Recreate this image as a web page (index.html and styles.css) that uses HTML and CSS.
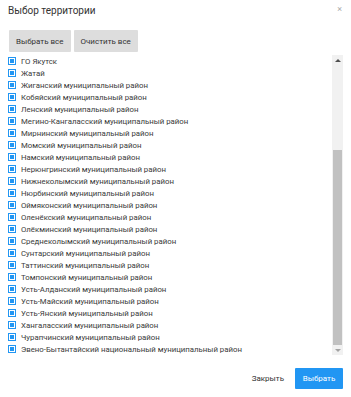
FILE: index.html
```html
<!DOCTYPE html>
<html lang="ru">
<head>
<meta charset="utf-8">
<link rel="stylesheet" href="styles.css">
</head>
<body>
<div class="dialog">
  <div class="header">
    <div class="title">Выбор территории</div>
    <div class="close">×</div>
  </div>
  <div class="toolbar">
    <button class="btn">Выбрать все</button>
    <button class="btn">Очистить все</button>
  </div>
  <div class="listwrap">
    <ul class="list">
      <li><span class="cb"></span>ГО Якутск</li>
      <li><span class="cb"></span>Жатай</li>
      <li><span class="cb"></span>Жиганский муниципальный район</li>
      <li><span class="cb"></span>Кобяйский муниципальный район</li>
      <li><span class="cb"></span>Ленский муниципальный район</li>
      <li><span class="cb"></span>Мегино-Кангаласский муниципальный район</li>
      <li><span class="cb"></span>Мирнинский муниципальный район</li>
      <li><span class="cb"></span>Момский муниципальный район</li>
      <li><span class="cb"></span>Намский муниципальный район</li>
      <li><span class="cb"></span>Нерюнгринский муниципальный район</li>
      <li><span class="cb"></span>Нижнеколымский муниципальный район</li>
      <li><span class="cb"></span>Нюрбинский муниципальный район</li>
      <li><span class="cb"></span>Оймяконский муниципальный район</li>
      <li><span class="cb"></span>Оленёкский муниципальный район</li>
      <li><span class="cb"></span>Олёкминский муниципальный район</li>
      <li><span class="cb"></span>Среднеколымский муниципальный район</li>
      <li><span class="cb"></span>Сунтарский муниципальный район</li>
      <li><span class="cb"></span>Таттинский муниципальный район</li>
      <li><span class="cb"></span>Томпонский муниципальный район</li>
      <li><span class="cb"></span>Усть-Алданский муниципальный район</li>
      <li><span class="cb"></span>Усть-Майский муниципальный район</li>
      <li><span class="cb"></span>Усть-Янский муниципальный район</li>
      <li><span class="cb"></span>Хангаласский муниципальный район</li>
      <li><span class="cb"></span>Чурапчинский муниципальный район</li>
      <li><span class="cb"></span>Эвено-Бытантайский национальный муниципальный район</li>
    </ul>
    <div class="scrollbar">
      <div class="arrow up"></div>
      <div class="track-space"></div>
      <div class="thumb"></div>
      <div class="arrow down"></div>
    </div>
  </div>
  <div class="footer">
    <button class="link">Закрыть</button>
    <button class="primary">Выбрать</button>
  </div>
</div>
</body>
</html>
```
FILE: styles.css
```css
html, body {
  margin: 0;
  padding: 0;
  background: #fff;
}
body {
  font-family: Roboto, "Liberation Sans", Arial, sans-serif;
  color: #333;
}
.dialog {
  width: 351px;
  height: 397px;
  box-sizing: border-box;
  padding: 0 8px;
}
.header {
  height: 30px;
  display: flex;
  justify-content: space-between;
  align-items: flex-start;
}
.title {
  font-size: 10px;
  line-height: 12px;
  padding-top: 5px;
  color: #333;
}
.close {
  font-size: 9px;
  line-height: 10px;
  color: #aaa;
  padding-top: 4px;
  margin-right: 1px;
}
.toolbar {
  display: flex;
  gap: 3px;
  height: 22px;
  padding-left: 1px;
}
.btn {
  font-family: inherit;
  font-size: 8px;
  color: #333;
  background: #dddddd;
  border: none;
  border-radius: 1px;
  height: 22px;
  padding: 0 7px;
  margin: 0;
}
.listwrap {
  display: flex;
  margin-top: 3px;
  height: 300px;
}
.list {
  flex: 1;
  list-style: none;
  margin: 0;
  padding: 0;
  overflow: hidden;
}
.list li {
  height: 12px;
  display: flex;
  align-items: center;
  font-size: 7.8px;
  white-space: nowrap;
  color: #3a3a3a;
}
.cb {
  width: 8px;
  height: 8px;
  box-sizing: border-box;
  border: 1px solid #2196f3;
  background: #2196f3;
  box-shadow: inset 0 0 0 1px #fff;
  margin-right: 5px;
  flex: none;
}
.scrollbar {
  width: 11px;
  background: #f1f1f1;
  display: flex;
  flex-direction: column;
  align-items: center;
}
.arrow {
  height: 10px;
  width: 11px;
  display: flex;
  justify-content: center;
  align-items: center;
}
.arrow::before {
  content: "";
  width: 0;
  height: 0;
  border-left: 3px solid transparent;
  border-right: 3px solid transparent;
}
.arrow.up::before {
  border-bottom: 3px solid #505050;
}
.arrow.down::before {
  border-top: 3px solid #a3a3a3;
}
.track-space {
  flex: 1;
}
.thumb {
  width: 9px;
  height: 195px;
  background: #c1c1c1;
}
.footer {
  display: flex;
  justify-content: flex-end;
  align-items: center;
  margin-top: 13px;
  height: 21px;
}
.link {
  font-family: inherit;
  font-size: 8px;
  color: #333;
  background: none;
  border: none;
  padding: 0 11px;
  height: 21px;
}
.primary {
  font-family: inherit;
  font-size: 8px;
  color: #fff;
  background: #2196f3;
  border: none;
  border-radius: 1px;
  height: 21px;
  width: 48px;
  padding: 0;
}
```
